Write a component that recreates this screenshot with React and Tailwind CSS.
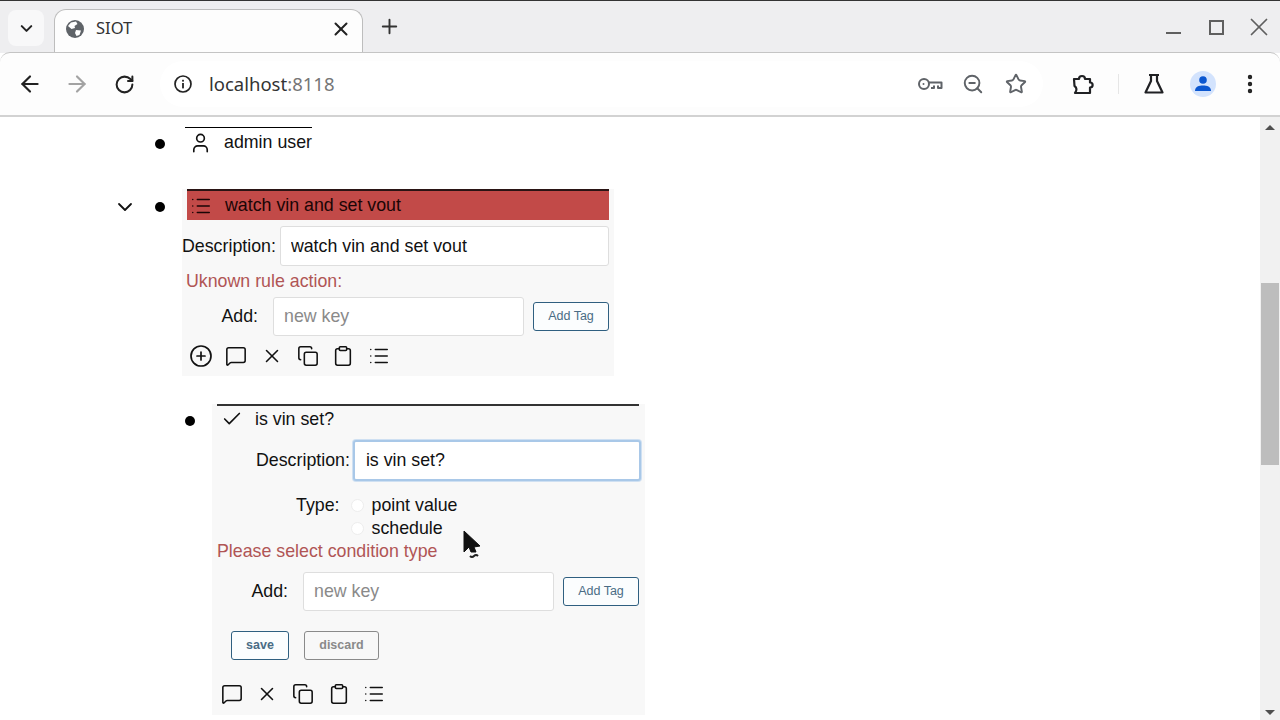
import React from "react";
import {
  ArrowLeft,
  ArrowRight,
  Check,
  ChevronDown,
  CirclePlus,
  Clipboard,
  Copy,
  List,
  MessageSquare,
  MoreVertical,
  Plus,
  RotateCw,
  Star,
  User,
  X,
  ZoomOut,
} from "lucide-react";

const GlobeIcon = () => (
  <svg width="20" height="20" viewBox="0 0 20 20">
    <circle cx="10" cy="10" r="9" fill="#5f6368" />
    <path d="M6 3.5 L11 2.5 L12.5 5 L9.5 7 L10 9 L6.5 10 L3 7 Z" fill="#fff" />
    <path d="M11 11 L16 11.5 L14.5 16 L11.5 17 L10 14 Z" fill="#fff" />
  </svg>
);

const InfoIcon = () => (
  <svg width="20" height="20" viewBox="0 0 20 20" fill="none">
    <circle cx="10" cy="10" r="8" stroke="#222" strokeWidth="1.7" />
    <rect x="9.1" y="9" width="1.8" height="5.4" fill="#222" />
    <rect x="9.1" y="5.8" width="1.8" height="1.8" fill="#222" />
  </svg>
);

const KeyIcon = () => (
  <svg width="26" height="16" viewBox="0 0 26 16" fill="none" stroke="#5f6368" strokeWidth="2">
    <circle cx="7" cy="8" r="5" />
    <path d="M12 6.5 H24.5 V12 H21 V9.5 M17 9.5 V12 H14" strokeLinejoin="round" />
    <circle cx="6.5" cy="8" r="1" fill="#5f6368" stroke="none" />
  </svg>
);

const PuzzleIcon = () => (
  <svg width="24" height="24" viewBox="0 0 24 24" fill="none" stroke="#202124" strokeWidth="2.2" strokeLinejoin="round">
    <path d="M3 7 H8 C8 3 14 3 14 7 H19 V10.5 C22.5 10.5 22.5 15.5 19 15.5 V21 H4 C6 18.5 6 15.5 3.5 14 Z" />
  </svg>
);

const FlaskIcon = () => (
  <svg width="22" height="22" viewBox="0 0 22 22" fill="none" stroke="#202124" strokeWidth="2.2" strokeLinejoin="round">
    <path d="M6 2 H16 M8 2 V8 L2.5 19.5 H19.5 L14 8 V2" />
  </svg>
);

const AvatarIcon = () => (
  <div className="w-[26px] h-[26px] rounded-full bg-[#d3e3fd] flex items-center justify-center">
    <svg width="18" height="18" viewBox="0 0 18 18" fill="#0b57d0">
      <circle cx="9" cy="5" r="3.8" />
      <path d="M1 16 C1 11.5 5 10.5 9 10.5 C13 10.5 17 11.5 17 16 Z" />
    </svg>
  </div>
);

const Cursor = () => (
  <svg className="absolute left-[462px] top-[412px]" width="22" height="32" viewBox="0 0 22 32">
    <path d="M2 2 V23 L7 18 L9 23 L14 23 L12 18 L18 17 Z" fill="#111" stroke="#111" strokeWidth="1" strokeLinejoin="round" />
    <path d="M8 27 q2 2 4 0 q2 -2 4 0" fill="none" stroke="#222" strokeWidth="2" />
  </svg>
);

const AddRow = ({ labelWidth }) => (
  <div className="flex items-center h-[40px]">
    <div className={`text-right text-[#111] ${labelWidth}`}>Add:</div>
    <input
      placeholder="new key"
      className="ml-[15px] w-[251px] h-[39px] bg-white border border-[#dedede] rounded-[3px] px-[10px] text-[17.8px] placeholder:text-[#8a8a8a] outline-none"
    />
    <button className="ml-[9px] w-[76px] h-[29px] bg-[#fbfdfe] border border-[#2f5f80] rounded-[3px] text-[12.5px] text-[#4a6c85]">
      Add Tag
    </button>
  </div>
);

const ActionIcon = ({ icon: Icon, size = 22 }) => (
  <div className="w-[35.6px] flex justify-center">
    <Icon size={size} strokeWidth={1.7} />
  </div>
);

const ActionIcons = ({ withAdd }) => (
  <div className="flex items-center h-[24px] text-[#111]">
    {withAdd && <ActionIcon icon={CirclePlus} size={24} />}
    <ActionIcon icon={MessageSquare} />
    <ActionIcon icon={X} />
    <ActionIcon icon={Copy} />
    <ActionIcon icon={Clipboard} />
    <ActionIcon icon={List} />
  </div>
);

const Bullet = () => <div className="w-[10px] h-[10px] rounded-full bg-black" />;

const App = () => {
  return (
    <div className="relative w-[1280px] h-[720px] overflow-hidden flex flex-col bg-white text-[17.8px] text-[#111] font-['Liberation_Sans',sans-serif]">
      {/* tab strip */}
      <div className="h-[53px] shrink-0 flex items-end bg-[#eeeef0] border-t border-[#333] pl-[8px]">
        <div className="self-start mt-[9px] w-[36px] h-[36px] rounded-[8px] bg-[#f8f8f9] flex items-center justify-center">
          <ChevronDown size={19} strokeWidth={2.6} className="text-[#222]" />
        </div>
        <div className="ml-[10px] w-[309px] h-[44px] bg-[#fdfdfd] border border-b-0 border-[#bdbdbd] rounded-t-[12px] flex items-center pl-[10px] pr-[10px] pb-[6px] font-['Noto_Sans',sans-serif] text-[16.5px] text-[#333]">
          <GlobeIcon />
          <span className="ml-[11px] flex-1">SIOT</span>
          <X size={22} strokeWidth={2.2} className="text-[#222]" />
        </div>
        <div className="self-start mt-[14px] ml-[15px]">
          <Plus size={23} strokeWidth={2} className="text-[#333]" />
        </div>
        <div className="flex-1" />
        <div className="self-start mt-[11px] flex items-center h-[30px] pr-[6px] text-[#5f5f5f]">
          <div className="mt-[12px] w-[15px] h-[2px] bg-[#5f5f5f]" />
          <div className="ml-[28px] w-[15px] h-[15px] border-2 border-[#5f5f5f]" />
          <X size={30} strokeWidth={1.4} className="ml-[20px]" />
        </div>
      </div>

      {/* toolbar */}
      <div className="h-[65px] shrink-0 flex items-center bg-[#fdfdfd] border-b-2 border-t border-t-[#c4c4c4] border-b-[#d2d2d2] rounded-t-[10px] -mt-px pl-[17px] pr-[18px]">
        <ArrowLeft size={26} strokeWidth={2} className="text-[#222]" />
        <ArrowRight size={26} strokeWidth={2} className="ml-[21px] text-[#a3a3a3]" />
        <RotateCw size={21} strokeWidth={2.3} className="ml-[24px] text-[#222]" />
        <div className="ml-[25px] w-[883px] h-[46px] rounded-full bg-white flex items-center pl-[13px] pr-[16px]">
          <InfoIcon />
          <span className="ml-[16px] flex-1 font-['Noto_Sans',sans-serif] text-[18.5px] text-[#333]">
            localhost<span className="text-[#767676]">:8118</span>
          </span>
          <KeyIcon />
          <ZoomOut size={22} strokeWidth={2.1} className="ml-[19px] text-[#5f6368]" />
          <Star size={22} strokeWidth={2.1} className="ml-[21px] text-[#5f6368]" />
        </div>
        <div className="ml-[28px]">
          <PuzzleIcon />
        </div>
        <div className="ml-[23px] w-px h-[20px] bg-[#e6e6e6]" />
        <div className="ml-[24px]">
          <FlaskIcon />
        </div>
        <div className="ml-[25px]">
          <AvatarIcon />
        </div>
        <MoreVertical size={24} strokeWidth={2.4} className="ml-[22px] text-[#222]" />
      </div>

      {/* page */}
      <div className="relative flex-1 flex min-h-0">
        <div className="flex-1 min-w-0 overflow-hidden">
          {/* admin user */}
          <div className="flex pt-[10px] ml-[155px]">
            <div className="w-[30px] pt-[12px]">
              <Bullet />
            </div>
            <div className="w-[127px] border-t border-black flex items-center h-[30px] pl-[4px] whitespace-nowrap">
              <User size={24} strokeWidth={1.7} />
              <span className="ml-[12px]">admin user</span>
            </div>
          </div>

          {/* rule */}
          <div className="flex mt-[32px] ml-[115px]">
            <div className="w-[40px] h-[36px] flex items-center">
              <ChevronDown size={24} strokeWidth={1.8} className="-ml-[2px]" />
            </div>
            <div className="w-[27px] pt-[13px]">
              <Bullet />
            </div>
            <div className="w-[432px] h-[187px] bg-[#f8f8f8]">
              <div className="ml-[5px] w-[422px] h-[31px] bg-[#c24a48] border-t-2 border-[#2a1414] flex items-center pl-[3px] text-[#1a0505]">
                <List size={22} strokeWidth={1.7} />
                <span className="ml-[13px]">watch vin and set vout</span>
              </div>
              <div className="flex items-center mt-[6px]">
                <span>Description:</span>
                <input
                  defaultValue="watch vin and set vout"
                  className="ml-[4px] w-[329px] h-[40px] bg-white border border-[#dedede] rounded-[3px] px-[10px] text-[17.8px] text-[#111] outline-none"
                />
              </div>
              <div className="ml-[4px] mt-[4px] h-[22px] leading-[22px] text-[#b05555]">Uknown rule action:</div>
              <div className="mt-[4px]">
                <AddRow labelWidth="w-[76px]" />
              </div>
              <div className="ml-[1px] mt-[8px]">
                <ActionIcons withAdd />
              </div>
            </div>
          </div>

          {/* condition */}
          <div className="flex mt-[28px] ml-[185px]">
            <div className="w-[27px] pt-[12px]">
              <Bullet />
            </div>
            <div className="w-[433px] h-[311px] bg-[#f8f8f8]">
              <div className="ml-[5px] w-[422px] h-[30px] border-t-2 border-[#333] flex items-center pl-[4px] pb-[2px]">
                <Check size={22} strokeWidth={1.8} />
                <span className="ml-[12px]">is vin set?</span>
              </div>
              <div className="flex items-center mt-[6px] ml-[44px]">
                <span>Description:</span>
                <input
                  defaultValue="is vin set?"
                  className="ml-[3px] w-[288px] h-[41px] bg-white border-2 border-[#a9c8e8] ring-1 ring-[#cfe0f2] rounded-[3px] px-[11px] text-[17.8px] text-[#111] outline-none"
                />
              </div>
              <div className="flex mt-[13px] ml-[84px]">
                <span className="leading-[23px]">Type:</span>
                <div className="ml-[11px]">
                  <div className="flex items-center h-[23px]">
                    <span className="w-[13px] h-[13px] rounded-full bg-white border border-[#ededed]" />
                    <span className="ml-[8px]">point value</span>
                  </div>
                  <div className="flex items-center h-[23px]">
                    <span className="w-[13px] h-[13px] rounded-full bg-white border border-[#ededed]" />
                    <span className="ml-[8px]">schedule</span>
                  </div>
                </div>
              </div>
              <div className="ml-[5px] h-[23px] leading-[23px] text-[#b05555]">Please select condition type</div>
              <div className="mt-[8px] ml-[30px]">
                <AddRow labelWidth="w-[46px]" />
              </div>
              <div className="flex mt-[20px] ml-[19px] gap-[15px] font-bold text-[12.5px]">
                <button className="w-[58px] h-[29px] bg-[#fbfdfe] border border-[#2f5f80] rounded-[3px] text-[#4a6c85]">
                  save
                </button>
                <button className="w-[75px] h-[29px] bg-[#f8f8f8] border border-[#8a8a8a] rounded-[3px] text-[#8a8a8a]">
                  discard
                </button>
              </div>
              <div className="ml-[2px] mt-[22px]">
                <ActionIcons />
              </div>
            </div>
          </div>
        </div>

        {/* scrollbar */}
        <div className="w-[20px] shrink-0 flex flex-col bg-[#f1f1f1]">
          <div className="h-[20px] flex items-center justify-center">
            <div className="w-0 h-0 border-x-[5px] border-x-transparent border-b-[5px] border-b-[#505050]" />
          </div>
          <div className="mt-[146px] mx-[1px] h-[182px] bg-[#bdbdbd]" />
          <div className="flex-1" />
          <div className="h-[16px] flex items-center justify-center">
            <div className="w-0 h-0 border-x-[5px] border-x-transparent border-t-[5px] border-t-[#505050]" />
          </div>
        </div>

        <Cursor />
      </div>
    </div>
  );
};

export default App;
